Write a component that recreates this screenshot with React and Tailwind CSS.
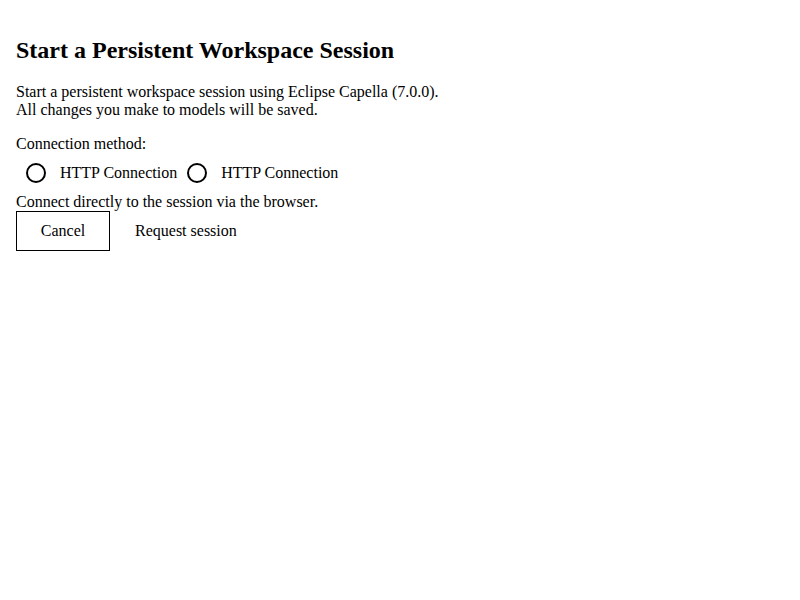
import React, { useState } from 'react';

export default function App() {
  const [method, setMethod] = useState(null);
  return (
    <div className="px-4 pt-[36px] font-['Liberation_Serif',serif] text-black text-[16px] leading-[18px]">
      <h1 className="text-[24px] leading-[28px] font-bold">Start a Persistent Workspace Session</h1>
      <p className="mt-[19px]">
        Start a persistent workspace session using Eclipse Capella (7.0.0).
        <br />
        All changes you make to models will be saved.
      </p>
      <div className="mt-[16px]">Connection method:</div>
      <div className="mt-[10px] flex items-center pl-[10px]">
        {[0, 1].map((i) => (
          <label key={i} className="flex items-center cursor-pointer mr-[10px]" onClick={() => setMethod(i)}>
            <span className="w-[20px] h-[20px] rounded-full border-2 border-black flex items-center justify-center">
              {method === i && <span className="w-[10px] h-[10px] rounded-full bg-black" />}
            </span>
            <span className="ml-[14px]">HTTP Connection</span>
          </label>
        ))}
      </div>
      <div className="mt-[10px]">Connect directly to the session via the browser.</div>
      <div className="flex items-center">
        <button className="w-[94px] h-[40px] border border-black bg-white">Cancel</button>
        <button className="ml-[25px]">Request session</button>
      </div>
    </div>
  );
}
